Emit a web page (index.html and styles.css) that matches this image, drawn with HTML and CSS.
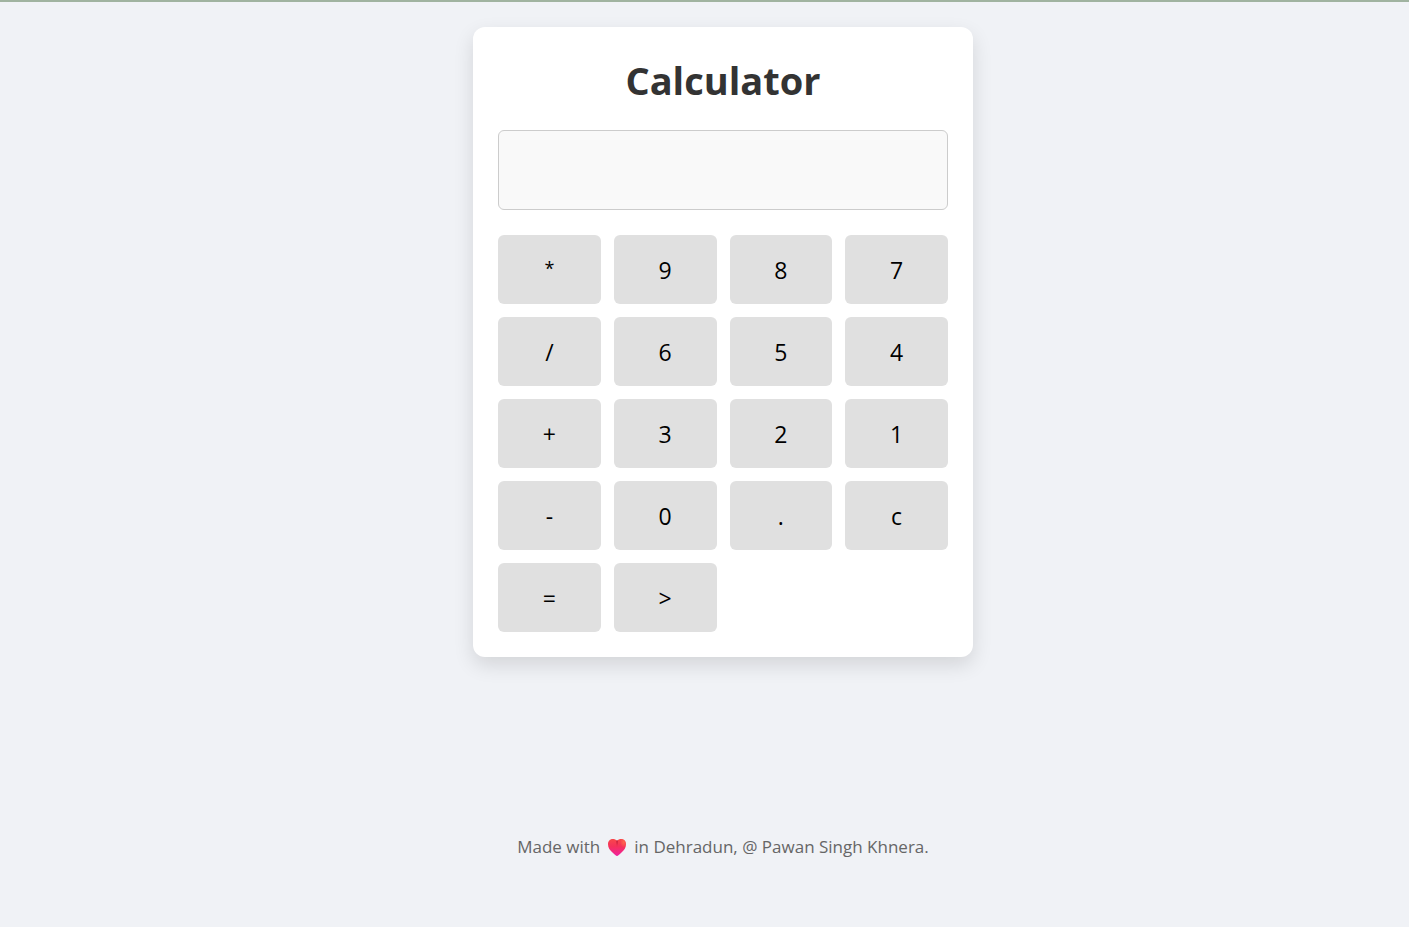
FILE: index.html
```html
<!DOCTYPE html>
<html lang="en">
<head>
<meta charset="utf-8">
<meta name="viewport" content="width=device-width, initial-scale=1">
<title>Calculator</title>
<link rel="stylesheet" href="styles.css">
</head>
<body>
<main class="calculator">
  <h1 class="title">Calculator</h1>
  <input class="display" type="text" aria-label="Display" readonly>
  <div class="keys">
    <button type="button" class="key key-star">*</button>
    <button type="button" class="key">9</button>
    <button type="button" class="key">8</button>
    <button type="button" class="key">7</button>
    <button type="button" class="key">/</button>
    <button type="button" class="key">6</button>
    <button type="button" class="key">5</button>
    <button type="button" class="key">4</button>
    <button type="button" class="key">+</button>
    <button type="button" class="key">3</button>
    <button type="button" class="key">2</button>
    <button type="button" class="key">1</button>
    <button type="button" class="key">-</button>
    <button type="button" class="key">0</button>
    <button type="button" class="key">.</button>
    <button type="button" class="key">c</button>
    <button type="button" class="key">=</button>
    <button type="button" class="key">&gt;</button>
  </div>
</main>
<footer class="footer">
  <span>Made with</span>
  <svg class="heart" viewBox="0 0 20 20" role="img" aria-label="love">
    <defs>
      <linearGradient id="heart-fill" x1="0" y1="0" x2="0" y2="1">
        <stop offset="0" stop-color="#f8484a"/>
        <stop offset="0.45" stop-color="#f5305c"/>
        <stop offset="1" stop-color="#f022a0"/>
      </linearGradient>
      <radialGradient id="heart-shine" cx="0.75" cy="0.25" r="0.4">
        <stop offset="0" stop-color="#ff6a4d" stop-opacity="0.9"/>
        <stop offset="1" stop-color="#ff6a4d" stop-opacity="0"/>
      </radialGradient>
      <linearGradient id="heart-fold" x1="0" y1="0" x2="0" y2="1">
        <stop offset="0" stop-color="#c01838"/>
        <stop offset="1" stop-color="#c01838" stop-opacity="0"/>
      </linearGradient>
    </defs>
    <path fill="url(#heart-fill)" d="M10 19C9 19 7.800 17.500 5.500 15.500 3 13.300 1 11 1 7.200 1 4.100 3 2 5.600 2 7.500 2 9 2.600 10 3.800 11 2.600 12.500 2 14.400 2 17 2 19 4.100 19 7.200 19 11 17 13.300 14.500 15.500 12.200 17.500 11 19 10 19Z"/>
    <path fill="url(#heart-shine)" d="M10 3.800C11 2.600 12.500 2 14.400 2 17 2 19 4.100 19 7.200 19 11 17 13.300 14.500 15.500L10 12Z"/>
    <path fill="url(#heart-fold)" d="M9.300 3.200 10 3.800 10.700 3.200C11.200 5 10.800 8 10 10.500 9.500 8 9.200 5 9.300 3.200Z"/>
  </svg>
  <span>in Dehradun, @ Pawan Singh Khnera.</span>
</footer>
</body>
</html>
```
FILE: styles.css
```css
* {
  box-sizing: border-box;
}

body {
  margin: 0;
  min-height: 100vh;
  padding: 25px 15px 68px 52px;
  border-top: 2px solid #a0b3a0;
  display: flex;
  flex-direction: column;
  align-items: center;
  justify-content: space-between;
  background: #f0f2f6;
  font-family: "Segoe UI", "Open Sans", "Noto Sans", sans-serif;
}

.calculator {
  width: 100%;
  max-width: 500px;
  padding: 25px;
  border-radius: 12px;
  background: #fff;
  box-shadow: 0 8px 20px rgba(0, 0, 0, 0.12);
}

.title {
  margin: 0 0 22px;
  color: #333;
  font-size: 38px;
  line-height: 56px;
  font-weight: 700;
  text-align: center;
}

.display {
  display: block;
  width: 100%;
  height: 80px;
  margin-bottom: 25px;
  padding: 0 12px;
  border: 1px solid #ccc;
  border-radius: 6px;
  background: #f9f9f9;
  font: inherit;
  font-size: 32px;
  text-align: right;
}

.keys {
  display: grid;
  grid-template-columns: repeat(4, 1fr);
  gap: 13px;
}

.key {
  padding: 19px 0 17px;
  border: 0;
  border-radius: 6px;
  background: #e0e0e0;
  color: #000;
  font-family: inherit;
  font-size: 23px;
  line-height: 33px;
  cursor: pointer;
}

.key-star {
  padding: 17px 0 19px;
  font-size: 18px;
}

.footer {
  display: flex;
  align-items: center;
  gap: 7px;
  color: #666;
  font-size: 17px;
  line-height: 24px;
}

.heart {
  width: 20px;
  height: 20px;
}
```
